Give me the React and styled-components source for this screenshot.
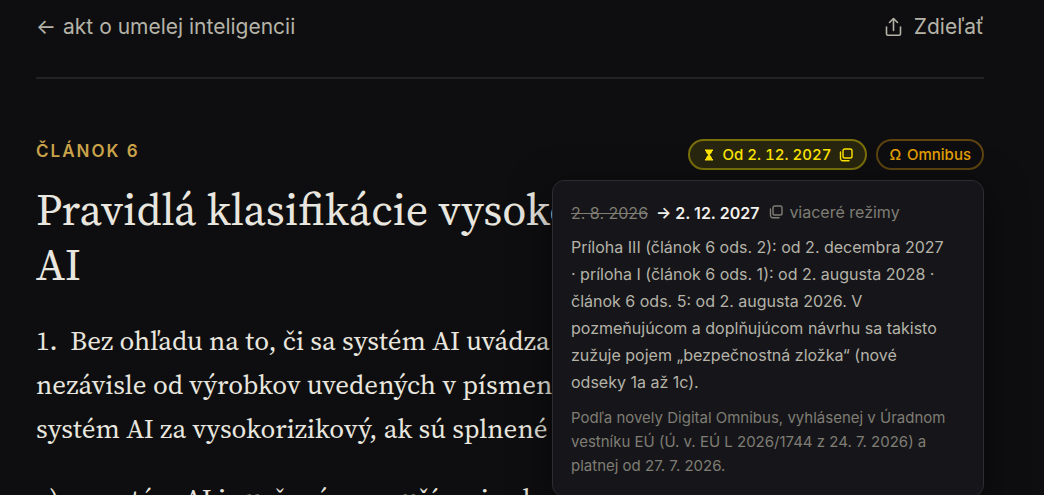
import styled, { createGlobalStyle } from "styled-components";

const GlobalStyle = createGlobalStyle`
    * {
        box-sizing: border-box;
    }
    body {
        margin: 0;
        background-color: #0e0e10;
        color: #e8e6df;
        font-family: Inter, sans-serif;
    }
`;

const ShareIcon = () => (
    <svg width="20" height="20" viewBox="0 0 20 20" fill="none" stroke="currentColor" strokeWidth="1.6" strokeLinecap="round" strokeLinejoin="round" aria-hidden="true">
        <path d="M9.5 13.5V2" />
        <path d="M5.5 5.5 9.5 1.5l4 4" />
        <path d="M2.5 10v6.8a1.4 1.4 0 0 0 1.4 1.4h11.2a1.4 1.4 0 0 0 1.4-1.4V10" />
    </svg>
);

const RegimesIcon = () => (
    <svg width="14" height="14" viewBox="0 0 14 14" fill="none" stroke="currentColor" strokeWidth="1.4" strokeLinecap="round" aria-hidden="true">
        <rect x="4" y="1" width="9" height="9" rx="1.8" />
        <path d="M1.5 4v6.5a2.2 2.2 0 0 0 2.2 2.2H10" />
    </svg>
);

const HourglassIcon = () => (
    <svg width="10" height="12" viewBox="0 0 10 12" fill="currentColor" aria-hidden="true">
        <path d="M1 0.5h8v1.6h-0.8c-0.2 1.8-1.4 2.8-2.5 3.9 1.1 1.1 2.3 2.1 2.5 3.9H9v1.6H1V9.9h0.8c0.2-1.8 1.4-2.8 2.5-3.9-1.1-1.1-2.3-2.1-2.5-3.9H1z" />
    </svg>
);

function App() {
    return (
        <Page>
            <GlobalStyle />
            <TopBar>
                <BackLink href="#akt">
                    <span>←</span>
                    <span>akt o umelej inteligencii</span>
                </BackLink>
                <ShareButton type="button">
                    <ShareIcon />
                    Zdieľať
                </ShareButton>
            </TopBar>
            <article>
                <ArticleHead>
                    <Eyebrow>Článok 6</Eyebrow>
                    <Badges>
                        <Badge type="button" $tone="date" aria-expanded="true">
                            <HourglassIcon />
                            Od 2. 12. 2027
                            <RegimesIcon />
                        </Badge>
                        <Badge type="button" $tone="omnibus">
                            <span>Ω</span>
                            Omnibus
                        </Badge>
                        <Popover>
                            <DateRow>
                                <OldDate>2. 8. 2026</OldDate>
                                <NewDate>→ 2. 12. 2027</NewDate>
                                <Regimes>
                                    <RegimesIcon />
                                    viaceré režimy
                                </Regimes>
                            </DateRow>
                            <Detail>
                                Príloha III (článok 6 ods. 2): od 2. decembra 2027 · príloha I (článok 6 ods. 1): od 2. augusta 2028 ·
                                článok 6 ods. 5: od 2. augusta 2026. V pozmeňujúcom a doplňujúcom návrhu sa takisto zužuje pojem
                                „bezpečnostná zložka“ (nové odseky 1a až 1c).
                            </Detail>
                            <Source>
                                Podľa novely Digital Omnibus, vyhlásenej v Úradnom vestníku EÚ (Ú. v. EÚ L 2026/1744 z 24. 7. 2026) a
                                platnej od 27. 7. 2026.
                            </Source>
                        </Popover>
                    </Badges>
                </ArticleHead>
                <Title>Pravidlá klasifikácie vysokorizikových systémov AI</Title>
                <Paragraph>
                    1.&nbsp; Bez ohľadu na to, či sa systém AI uvádza na trh alebo do prevádzky nezávisle&nbsp;od výrobkov
                    uvedených v písmenách a) a b), považuje sa uvedený systém&nbsp;AI&nbsp;za&nbsp;vysokorizikový, ak sú splnené
                    obe tieto podmienky:
                </Paragraph>
                <Point>
                    <span>a)</span>
                    <span>systém AI je určený na používanie ako bezpečnostný komponent výrobku</span>
                </Point>
            </article>
        </Page>
    );
}

export default App;

const Page = styled.main`
    height: 100vh;
    overflow: hidden;
    padding: 0 60px 0 36px;
`;

const TopBar = styled.header`
    display: flex;
    justify-content: space-between;
    align-items: flex-start;
    padding: 12px 0 35px;
    border-bottom: 2px solid #222225;
    font-size: 21px;
    line-height: 30px;
    color: #b5b3a8;
`;

const BackLink = styled.a`
    display: flex;
    gap: 7px;
    color: inherit;
    text-decoration: none;
`;

const ShareButton = styled.button`
    display: flex;
    align-items: center;
    gap: 10px;
    padding: 0;
    border: none;
    background: none;
    color: inherit;
    font: inherit;
    cursor: pointer;
`;

const ArticleHead = styled.div`
    display: flex;
    justify-content: space-between;
    align-items: flex-start;
    padding-top: 60px;
`;

const Eyebrow = styled.p`
    margin: 0;
    font-size: 17px;
    line-height: 25px;
    font-weight: 600;
    letter-spacing: 2px;
    text-transform: uppercase;
    color: #c9a24a;
`;

const Badges = styled.div`
    position: relative;
    display: flex;
    gap: 9px;
`;

const Badge = styled.button`
    display: flex;
    align-items: center;
    gap: ${({ $tone }) => ($tone === "date" ? "8px" : "6px")};
    height: 31px;
    padding: ${({ $tone }) => ($tone === "date" ? "0 12px 0 14px" : "0 11px")};
    border: 2px solid ${({ $tone }) => ($tone === "date" ? "#7a7009" : "#5c430f")};
    border-radius: 16px;
    background-color: ${({ $tone }) => ($tone === "date" ? "#29260f" : "transparent")};
    color: ${({ $tone }) => ($tone === "date" ? "#ffe600" : "#e5a000")};
    font-family: inherit;
    font-size: 15px;
    font-weight: 500;
    font-variant-numeric: tabular-nums;
    cursor: pointer;
`;

const Popover = styled.div`
    position: absolute;
    top: calc(100% + 10px);
    right: 0;
    width: 432px;
    padding: 18px;
    border: 1px solid #2c2c31;
    border-radius: 12px;
    background-color: #16161a;
    box-shadow: 0 12px 40px rgba(0, 0, 0, 0.5);
`;

const DateRow = styled.div`
    display: flex;
    align-items: flex-end;
    padding-top: 1px;
    font-size: 16px;
    line-height: 27px;
`;

const OldDate = styled.s`
    margin-right: 8px;
    color: #7f7d74;
`;

const NewDate = styled.strong`
    margin-right: 10px;
    font-weight: 600;
    color: #f2f0ea;
`;

const Regimes = styled.span`
    display: flex;
    align-items: center;
    align-self: flex-start;
    gap: 6px;
    line-height: 24px;
    color: #7f7d74;
`;

const Detail = styled.p`
    margin: 7px 0 0;
    padding-right: 16px;
    font-size: 16px;
    line-height: 27px;
    color: #b5b3a8;
`;

const Source = styled.p`
    margin: 10px 0 0;
    font-size: 15px;
    line-height: 24px;
    color: #7f7d74;
`;

const Title = styled.h1`
    margin: 12px 0 27px;
    font-family: "Source Serif 4", "Liberation Serif", serif;
    font-size: 44px;
    line-height: 55px;
    font-weight: 400;
`;

const Paragraph = styled.p`
    margin: 0 0 26px;
    font-family: "Source Serif 4", "Liberation Serif", serif;
    font-size: 27px;
    line-height: 44px;
`;

const Point = styled(Paragraph)`
    display: grid;
    grid-template-columns: 58px 1fr;
`;
